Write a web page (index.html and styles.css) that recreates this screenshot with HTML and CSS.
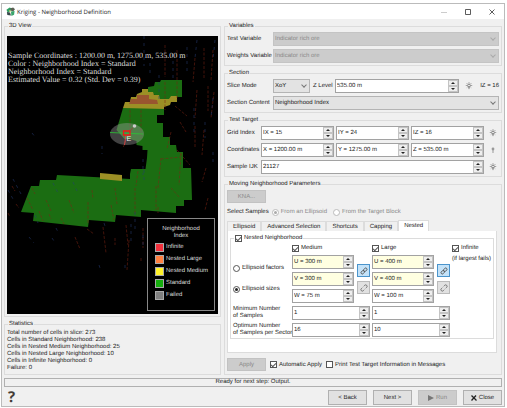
FILE: index.html
```html
<!DOCTYPE html>
<html lang="en">
<head>
<meta charset="utf-8">
<title>Kriging - Neighborhood Definition</title>
<link rel="stylesheet" href="styles.css">
</head>
<body>
<svg class="defs" aria-hidden="true">
  <symbol id="bulb" viewBox="0 0 8 8"><circle cx="4" cy="3.5" r="1.4" fill="none" stroke="#555" stroke-width=".7"/><path d="M3.3 5.5h1.4M3.4 6.6h1.2M4 .3v1M.8 3.5h1M6.2 3.5h1M1.7 1.2l.7.7M6.3 1.2l-.7.7M1.8 5.6l.6-.5M6.2 5.6l-.6-.5" stroke="#666" stroke-width=".7"/></symbol>
  <symbol id="bulb-off" viewBox="0 0 8 8"><circle cx="4" cy="3" r="1.4" fill="#999"/><path d="M4 4v3" stroke="#999"/></symbol>
  <symbol id="chain" viewBox="0 0 8 8"><g fill="none" stroke="#555" stroke-width=".9" transform="rotate(-45 4 4)"><rect x=".3" y="2.7" width="3.8" height="2.6" rx="1.3"/><rect x="3.9" y="2.7" width="3.8" height="2.6" rx="1.3"/></g></symbol>
  <symbol id="unchain" viewBox="0 0 8 8"><g fill="none" stroke="#666" stroke-width=".8" transform="rotate(-45 4 4)"><path d="M3 2.6H1.6a1.4 1.4 0 0 0 0 2.8H3M5 2.6h1.4a1.4 1.4 0 0 1 0 2.8H5"/></g></symbol>
</svg>
<main class="window">
  <header class="titlebar">
    <svg class="logo" viewBox="0 0 10 10"><path d="M.5 3l3.500-2.500 2 1-1 3-3 2z" fill="#2f9e62"/><path d="M5 1.500l3-1 2 2-2 2.500-3-1z" fill="#5a5f52"/><path d="M1 5.500l3.500.500 1 3.500-4-.5z" fill="#37474a"/><path d="M5.500 5l4-.5-.5 4-3 1.500z" fill="#3aa56c"/><path d="M3 3.500l2 .5v2z" fill="#e8d75a"/></svg>
    <h1>Kriging - Neighborhood Definition</h1>
    <button class="wbtn" aria-label="Minimize"><svg viewBox="0 0 6 6"><path d="M0 3.500h6" stroke="#ccc"/></svg></button>
    <button class="wbtn" aria-label="Maximize"><svg viewBox="0 0 6 6"><path d="M.5.500h5v5h-5z" fill="none" stroke="#333" stroke-width=".8"/></svg></button>
    <button class="wbtn" aria-label="Close window"><svg viewBox="0 0 6 6"><path d="M.5.5l5 5M5.500.5l-5 5" stroke="#333" stroke-width=".8"/></svg></button>
  </header>
  <div class="columns">
    <div class="left">
      <fieldset class="view">
        <legend>3D View</legend>
        <div class="scene">
          <svg class="model" viewBox="8 36 210 278" preserveAspectRatio="xMinYMin meet" aria-label="Block model slice">
            <path fill="#1b6d12" d="M149 87l6-1 1-4h5l1-2h21v17h-11v3h-10l-9-7-4-1zM124 108h41v7h-7v8h6v14h7v8h6l1 7h6v16h8l1 32h-8v6h-8v7l-35-3v7l-25-2-1 7-26-2-1 7-55-6 1-8-13-1 10-26h8l1-6h16l1-5 73 4v-5l1-5h14.500l1.500-11 .5-8h-5v-4l-6-1v-4l-7-2h-5l-8-9z"/>
            <path fill="#9c8f25" d="M124 108l2-6h5l1-5h5l1-3 5-2v-3h6v3h5l1 3h5l1 4h9l2-3h6v6h-6l-1 3-6 2v2zM101 173l22 2v6l-22-2z"/>
            <path fill="#99552f" d="M130 104l2-5h6v-4h12v4l8 1 1 4z"/>
            <g fill="none" stroke="#7c2312" stroke-width=".6" stroke-dasharray="3 1.500" opacity=".9">
              <path d="M166 45v32M178 50v50M166 82v28M176 106l12 10M196 58l-2 24M205 48v31M214 50l-2 30M198 90l-2 28M209 86v25M215 92l-3 26M181 122l6 10M196 126v22M205 130l-2 25M172 132l-4 17M142 110v28M131 110v22M127 140l-3 8M162 158l-3 30M182 153l-2 32M162 159l20-2M178 150l13 15M207 168l-4 14M209 198l-3 12M172 188l9 10M157 186v24M136 188v27M139 171l-2 15M116 188l2 16M112 205l3 15M93 190l1 9M89 202v22M70 200l5 13M47 200l5 11M33 188l3 6M28 198l6 12M13 186l3 5M17 204l3 4M9 213l2 4M40 211l4 10M50 214l2 5M62 218l3 6M76 237l5 12M88 229l7 5M104 227l3 26M116 238v7M127 225l2 20M130 240l-2 30M144 228v20M142 258v4M159 207v6"/>
            </g>
            <g fill="none" stroke="#263c75" stroke-width=".6" stroke-dasharray="3 4" opacity=".9">
              <path d="M145 36v30M151 63v14M160 75v25M174 54v28M188 47v24M198 40l-2 18M216 40l-2 20M214 98l-2 20M195 108v24M206 122v16M33 133l4 5M103 146v8M14 179l8 15M9 190l5 9M54 183l5 10M74 182l4 9M144 159v16M145 170v14M214 152v14M36 215l3 8M57 228l3 6M30 237l5 6M53 238l2 3M100 265l1 3M126 265v3M136 212v18M132 224v20M105 223l2 6M144 235v13"/>
            </g>
            <ellipse cx="128" cy="134" rx="17" ry="11" fill="#9b9b9b" opacity=".42"/>
            <path d="M111 132.500l33 1.500" stroke="#29c534" stroke-width=".8"/>
            <path d="M127 135l-1.500 10" stroke="#e44" stroke-width=".8"/>
            <path d="M124.500 131h6.500v4h-6.500z" fill="none" stroke="#f01818" stroke-width="1.300"/>
            <path d="M131 131.500l3-4" stroke="#a33" stroke-width=".7"/>
            <circle cx="135.500" cy="126" r="1.800" fill="#ccc"/>
            <text x="127.500" y="140.500" class="axis">E</text>
          </svg>
          <p class="readout">Sample Coordinates : 1200.00 m, 1275.00 m, 535.00 m<br>Color : Neighborhood Index = Standard<br>Neighborhood Index = Standard<br>Estimated Value = 0.32 (Std. Dev = 0.39)</p>
          <div class="key">
            <p>Neighborhood<br>Index</p>
            <ul>
              <li><i class="sw red"></i>Infinite</li>
              <li><i class="sw orange"></i>Nested Large</li>
              <li><i class="sw yellow"></i>Nested Medium</li>
              <li><i class="sw green"></i>Standard</li>
              <li><i class="sw gray"></i>Failed</li>
            </ul>
          </div>
        </div>
      </fieldset>
      <fieldset class="stats">
        <legend>Statistics</legend>
        <p>Total number of cells in slice: 273<br>Cells in Standard Neighborhood: 238<br>Cells in Nested Medium Neighborhood: 25<br>Cells in Nested Large Neighborhood: 10<br>Cells in Infinite Neighborhood: 0<br>Failure: 0</p>
      </fieldset>
    </div>
    <div class="right">
      <fieldset class="rows">
        <legend>Variables</legend>
        <div class="row"><label class="lab" for="tv">Test Variable</label><span class="drop off"><select id="tv" disabled><option>Indicator rich ore</option></select></span></div>
        <div class="row"><label class="lab" for="wv">Weights Variable</label><span class="drop off"><select id="wv" disabled><option>Indicator rich ore</option></select></span></div>
      </fieldset>
      <fieldset class="rows">
        <legend>Section</legend>
        <div class="row">
          <label class="lab" for="sm">Slice Mode</label><span class="drop short"><select id="sm"><option>XoY</option></select></span>
          <label class="zlab" for="zl">Z Level</label>
          <span class="spin"><input id="zl" value="535.00 m"><span class="arrows"><button aria-label="Up"></button><button aria-label="Down"></button></span></span>
          <svg class="bulb"><use href="#bulb"/></svg><span class="iz">IZ = 16</span>
        </div>
        <div class="row"><label class="lab" for="sc">Section Content</label><span class="drop"><select id="sc"><option>Neighborhood Index</option></select></span></div>
      </fieldset>
      <fieldset class="rows target">
        <legend>Test Target</legend>
        <div class="row"><label class="lab" for="ix">Grid Index</label>
          <span class="spin"><input id="ix" value="IX = 15"><span class="arrows"><button aria-label="Up"></button><button aria-label="Down"></button></span></span>
          <span class="spin"><input aria-label="IY" value="IY = 24"><span class="arrows"><button aria-label="Up"></button><button aria-label="Down"></button></span></span>
          <span class="spin"><input aria-label="IZ" value="IZ = 16"><span class="arrows"><button aria-label="Up"></button><button aria-label="Down"></button></span></span>
          <svg class="bulb"><use href="#bulb"/></svg></div>
        <div class="row"><label class="lab" for="cx">Coordinates</label>
          <span class="spin"><input id="cx" value="X = 1200.00 m"><span class="arrows"><button aria-label="Up"></button><button aria-label="Down"></button></span></span>
          <span class="spin"><input aria-label="Y" value="Y = 1275.00 m"><span class="arrows"><button aria-label="Up"></button><button aria-label="Down"></button></span></span>
          <span class="spin"><input aria-label="Z" value="Z = 535.00 m"><span class="arrows"><button aria-label="Up"></button><button aria-label="Down"></button></span></span>
          <svg class="bulb"><use href="#bulb-off"/></svg></div>
        <div class="row"><label class="lab" for="ijk">Sample IJK</label>
          <span class="spin"><input id="ijk" value="21127"><span class="arrows"><button aria-label="Up"></button><button aria-label="Down"></button></span></span>
          <svg class="bulb"><use href="#bulb"/></svg></div>
      </fieldset>
      <fieldset class="moving">
        <legend>Moving Neighborhood Parameters</legend>
        <button class="btn" disabled>KNA...</button>
        <div class="samples"><span>Select Samples</span>
          <label class="dim"><input type="radio" name="from" checked disabled>From an Ellipsoid</label>
          <label class="dim"><input type="radio" name="from" disabled>From the Target Block</label></div>
        <div class="tabs" role="tablist">
          <button role="tab">Ellipsoid</button><button role="tab">Advanced Selection</button><button role="tab">Shortcuts</button><button role="tab">Capping</button><button role="tab" aria-selected="true">Nested</button>
        </div>
        <div class="panel">
          <fieldset class="nested">
            <legend><label><input type="checkbox" checked>Nested Neighborhood</label></legend>
            <div class="sets">
              <div class="kinds">
                <label><input type="radio" name="kind">Ellipsoid factors</label>
                <label><input type="radio" name="kind" checked>Ellipsoid sizes</label>
              </div>
              <div class="set">
                <label><input type="checkbox" checked>Medium</label>
                <div class="pair">
                  <div class="uvw">
                    <span class="spin warm"><input aria-label="Medium U" value="U = 300 m"><span class="arrows"><button aria-label="Up"></button><button aria-label="Down"></button></span></span>
                    <span class="spin warm"><input aria-label="Medium V" value="V = 300 m"><span class="arrows"><button aria-label="Up"></button><button aria-label="Down"></button></span></span>
                    <span class="spin"><input aria-label="Medium W" value="W = 75 m"><span class="arrows"><button aria-label="Up"></button><button aria-label="Down"></button></span></span>
                  </div>
                  <div class="links"><button class="link on" aria-label="Link"><svg><use href="#chain"/></svg></button><button class="link" aria-label="Unlink"><svg><use href="#unchain"/></svg></button></div>
                </div>
              </div>
              <div class="set">
                <label><input type="checkbox" checked>Large</label>
                <div class="pair">
                  <div class="uvw">
                    <span class="spin warm"><input aria-label="Large U" value="U = 400 m"><span class="arrows"><button aria-label="Up"></button><button aria-label="Down"></button></span></span>
                    <span class="spin warm"><input aria-label="Large V" value="V = 400 m"><span class="arrows"><button aria-label="Up"></button><button aria-label="Down"></button></span></span>
                    <span class="spin"><input aria-label="Large W" value="W = 100 m"><span class="arrows"><button aria-label="Up"></button><button aria-label="Down"></button></span></span>
                  </div>
                  <div class="links"><button class="link on" aria-label="Link"><svg><use href="#chain"/></svg></button><button class="link" aria-label="Unlink"><svg><use href="#unchain"/></svg></button></div>
                </div>
              </div>
              <div class="set"><label><input type="checkbox" checked>Infinite</label><span class="note">(if largest fails)</span></div>
              <label class="two" for="m1">Minimum Number<br>of Samples</label>
              <span class="spin"><input id="m1" value="1"><span class="arrows"><button aria-label="Up"></button><button aria-label="Down"></button></span></span>
              <span class="spin"><input aria-label="Large minimum" value="1"><span class="arrows"><button aria-label="Up"></button><button aria-label="Down"></button></span></span>
              <span></span>
              <label class="two" for="o1">Optimum Number<br>of Samples per Sector</label>
              <span class="spin"><input id="o1" value="16"><span class="arrows"><button aria-label="Up"></button><button aria-label="Down"></button></span></span>
              <span class="spin"><input aria-label="Large optimum" value="10"><span class="arrows"><button aria-label="Up"></button><button aria-label="Down"></button></span></span>
            </div>
          </fieldset>
        </div>
        <div class="apply"><button class="btn" disabled>Apply</button>
          <label><input type="checkbox" checked>Automatic Apply</label>
          <label><input type="checkbox">Print Test Target Information in Messages</label></div>
      </fieldset>
    </div>
  </div>
  <div class="status">Ready for next step: Output.</div>
  <footer class="foot">
    <button class="help" aria-label="Help">?</button>
    <button class="btn">&lt; Back</button>
    <button class="btn">Next &gt;</button>
    <button class="btn" disabled><svg viewBox="0 0 6 6"><path d="M0 0l6 3-6 3z" fill="#777"/></svg>Run</button>
    <button class="btn"><svg viewBox="0 0 6 6"><path d="M.5.5l5 5M5 .5l-4.500 5" stroke="#222" stroke-width="1.300"/></svg>Close</button>
  </footer>
</main>
</body>
</html>
```
FILE: styles.css
```css
* { box-sizing: border-box; }
body {
  margin: 0;
  min-height: 100vh;
  padding: 3px 2px 3px 1px;
  display: flex;
  background: #fff;
  color: #222;
  font: 6px/8px "Liberation Sans", sans-serif;
  text-rendering: geometricPrecision;
}
button, input, select { font: inherit; color: inherit; margin: 0; padding: 0; border-radius: 0; text-rendering: inherit; }
p, ul, h1 { margin: 0; padding: 0; }
ul { list-style: none; }
svg { display: block; }
label, span, .status, .btn { white-space: nowrap; }
.defs { position: absolute; width: 0; height: 0; }

.window {
  flex: 1;
  min-width: 0;
  display: flex;
  flex-direction: column;
  background: #f0f0f0;
  border: 1px solid #bbb;
}
.titlebar { display: flex; align-items: center; height: 15px; padding: 0 0 0 4px; background: #fff; }
.logo { width: 9px; height: 9px; margin-right: 2px; }
h1 { flex: 1; font: 6px/8px "Open Sans", sans-serif; }
.wbtn { width: 24px; height: 12px; border: 0; background: none; display: grid; place-items: center; }
.wbtn svg { width: 6px; height: 6px; }

.columns { flex: 1; display: flex; gap: 3px; padding: 3px 2px 0; }
.left { flex: 217; min-width: 0; display: flex; flex-direction: column; gap: 3px; }
.right { flex: 278; min-width: 0; display: flex; flex-direction: column; gap: 3px; }
fieldset { margin: 0; min-width: 0; border: 1px solid #dcdcdc; padding: 2px; }
legend { padding: 0 1px; margin-left: 1px; height: 8px; }

.view { flex: 1; display: flex; flex-direction: column; padding-top: 6px; }
.scene { position: relative; width: 100%; height: 278px; background: #000; color: #ddd; overflow: hidden; }
.model { width: 100%; height: 100%; }
.axis { font: 7px "Liberation Sans", sans-serif; fill: #eee; }
.readout { position: absolute; top: 16px; left: 1px; font: 8px/8px "Liberation Serif", serif; white-space: nowrap; }
.key { position: absolute; right: 3px; bottom: 3px; width: 68px; padding: 7px 0 9px 7px; border: 1px solid #888; background: #000; }
.key p { line-height: 7px; text-align: center; padding-right: 7px; }
.key ul { margin-top: 1px; }
.key li { display: flex; align-items: center; gap: 2px; height: 12px; white-space: nowrap; }
.sw { width: 9px; height: 9px; border: 1px solid #aaa; }
.red { background: #f0303c; }
.orange { background: #ff8040; }
.yellow { background: #fff22a; }
.green { background: #16ae0e; }
.gray { background: #808080; }
.stats p { line-height: 7px; }

.rows > .row + .row { margin-top: 3px; }
.row { display: flex; align-items: center; gap: 2px; height: 14px; }
.lab { width: 44px; }
.target .lab { width: 32px; }
.drop { position: relative; flex: 1; height: 14px; }
.drop select { width: 100%; height: 100%; padding: 0 1px; appearance: none; border: 1px solid #b4b4b4; background: #e3e3e3; }
.drop::after { content: ""; position: absolute; right: 4px; top: 4px; width: 3px; height: 3px; border: solid #777; border-width: 0 1px 1px 0; transform: rotate(45deg); }
.drop.off select { background: #ccc; border-color: #c4c4c4; color: #8a8a8a; opacity: 1; }
.drop.off::after { border-color: #aaa; }
.drop.short { flex: 0 0 37px; }
.zlab { margin: 0 1px; width: 19px; }
.spin { display: flex; flex: 1; min-width: 0; height: 14px; border: 1px solid #a2a2a2; background: #fff; }
.spin input { flex: 1; width: 0; min-width: 0; border: 0; padding: 0 1px; background: none; }
.spin.warm { background: #ffffe1; }
.arrows { width: 10px; display: flex; flex-direction: column; }
.arrows button { flex: 1; min-height: 0; border: 1px solid #c4c4c4; background: #eee; display: grid; place-items: center; }
.arrows button::before { content: ""; border: solid transparent; border-width: 0 2px 2px; border-bottom-color: #222; }
.arrows button + button::before { border-width: 2px 2px 0; border-top-color: #222; }
.bulb { width: 8px; height: 8px; margin: 0 4px; }
.target .bulb { margin: 0 2px 0 3px; }
.iz { width: 20px; text-align: right; }

.moving { flex: 1; }
.btn { width: 39px; height: 15px; border: 1px solid #b0b0b0; background: #e1e1e1; display: flex; align-items: center; justify-content: center; gap: 2px; }
.btn:disabled { background: #ccc; border-color: #c2c2c2; color: #888; }
.btn svg { width: 6px; height: 6px; }
.moving .btn { height: 13px; }
label:has(input) { display: flex; align-items: center; gap: 2px; height: 8px; }
input[type=checkbox], input[type=radio] { appearance: none; width: 7px; height: 7px; border: 1px solid #555; background: #fff; display: grid; place-items: center; flex: none; }
input[type=radio] { border-radius: 50%; }
input[type=checkbox]:checked::before { content: ""; width: 2px; height: 4px; border: solid #555; border-width: 0 1px 1px 0; transform: rotate(45deg); }
input[type=radio]:checked::before { content: ""; width: 3px; height: 3px; border-radius: 50%; background: #222; }
.dim { color: #888; }
input[type=radio]:disabled { border-color: #bbb; }
input[type=radio]:disabled::before { background: #aaa; }
.samples { display: flex; gap: 3px; margin: 5px 0 4px; }
.samples .dim + .dim { margin-left: 3px; }
.tabs { display: flex; align-items: flex-end; height: 11px; }
.tabs button { flex: none; height: 10px; padding: 0 5px; border: 1px solid #dcdcdc; border-bottom: 0; background: #f0f0f0; }
.tabs button[aria-selected] { height: 11px; background: #fff; }
.panel { height: 122px; margin-right: 2px; padding: 3px 2px 0; background: #fff; border: 1px solid #dcdcdc; border-top: 0; }
.nested { padding: 2px 2px 1px; }
.sets { display: grid; grid-template-columns: 57px 78px 78px 1fr; column-gap: 2px; row-gap: 3px; }
.kinds { display: flex; flex-direction: column; gap: 13px; padding-top: 20px; }
.set { display: flex; flex-direction: column; gap: 3px; }
.pair { display: flex; gap: 3px; }
.uvw { flex: 1; display: flex; flex-direction: column; gap: 3px; }
.uvw .spin { flex: none; }
.links { display: flex; flex-direction: column; gap: 4px; padding-top: 9px; }
.link { width: 13px; height: 13px; border: 1px solid #bbb; background: #e1e1e1; display: grid; place-items: center; }
.link.on { background: #c4e2f8; border-color: #4a94cc; }
.link svg { width: 8px; height: 8px; }
.two { line-height: 7px; }
.apply { display: flex; align-items: center; gap: 4px; margin-top: 5px; }

.status { height: 9px; margin: 3px 2px 0; border: 1px solid #b0b0b0; line-height: 7px; text-align: center; }
.foot { display: flex; align-items: center; gap: 6px; padding: 3px 2px 1px; }
.help { margin-right: auto; border: 0; background: none; padding: 0 4px; color: #443c36; font: bold 15px/15px "Open Sans", sans-serif; }
```
